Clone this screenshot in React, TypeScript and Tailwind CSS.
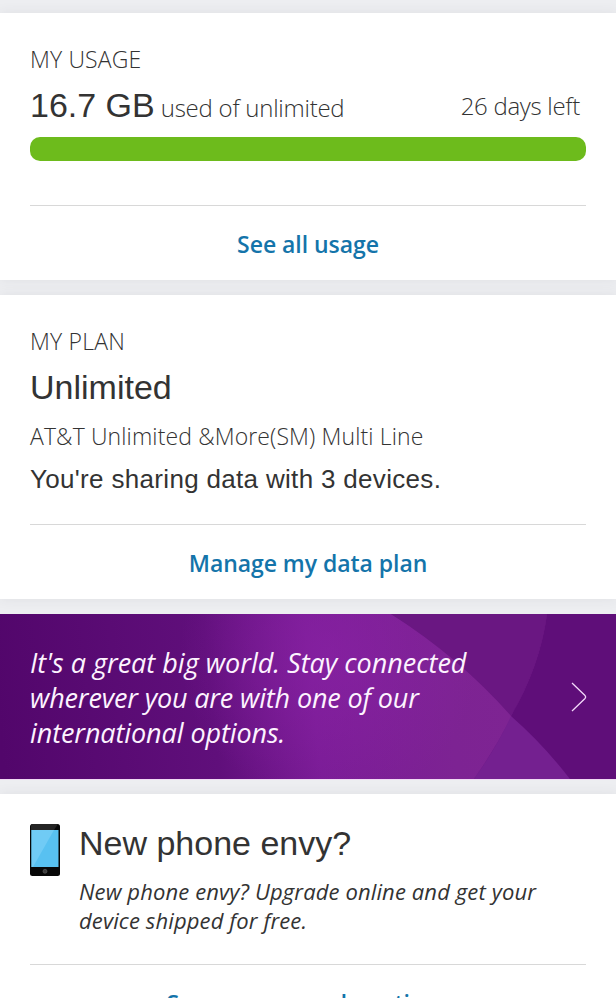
import React from 'react';

interface CardProps {
  className?: string;
  children: React.ReactNode;
}

const Card: React.FC<CardProps> = ({ className = '', children }) => (
  <section className={`bg-white px-[30px] shadow-[0_0_12px_rgba(60,60,80,0.08)] ${className}`}>{children}</section>
);

interface CardLinkProps {
  label: string;
  className?: string;
}

const CardLink: React.FC<CardLinkProps> = ({ label, className = '' }) => (
  <a
    href="#"
    className={`flex h-[75px] items-center justify-center whitespace-nowrap border-t border-[#d8d8d8] pt-0.5 text-[23px] font-semibold tracking-[-0.05px] text-[#1474aa] ${className}`}
  >
    {label}
  </a>
);

const PhoneIcon = () => (
  <svg width="30" height="52" viewBox="0 0 30 52" className="shrink-0">
    <rect width="30" height="52" rx="2.5" fill="#070707" />
    <path d="M2 0H28L24 6H1V2Q1 0 2 0Z" fill="#242424" />
    <rect x="1.5" y="6" width="27" height="37" fill="#58c1f1" />
    <path d="M1.5 6H24L3 43H1.5Z" fill="#70cbf5" />
    <circle cx="15" cy="47.3" r="2" fill="#3b3b3b" stroke="#626262" strokeWidth="0.6" />
  </svg>
);

const BannerArt = () => (
  <svg width="616" height="165" viewBox="0 0 616 165" className="absolute inset-0">
    <defs>
      <linearGradient id="base" gradientUnits="userSpaceOnUse" x1="0" y1="120" x2="560" y2="60">
        <stop offset="0" stopColor="#52066b" />
        <stop offset="0.38" stopColor="#600f7b" />
        <stop offset="0.56" stopColor="#7a1c96" />
        <stop offset="0.8" stopColor="#7d2393" />
        <stop offset="1" stopColor="#7f2592" />
      </linearGradient>
      <radialGradient id="glow" gradientUnits="userSpaceOnUse" cx="330" cy="40" r="150">
        <stop offset="0" stopColor="#8b22a6" stopOpacity="0.6" />
        <stop offset="1" stopColor="#8b22a6" stopOpacity="0" />
      </radialGradient>
    </defs>
    <rect width="616" height="165" fill="url(#base)" />
    <rect width="616" height="165" fill="url(#glow)" />
    <path d="M391 0Q495 63 570 165H474Q532 82 547 0Z" fill="#701b89" />
    <path d="M391 0H547Q540 52 511 102Q460 44 391 0Z" fill="#6a1782" />
    <path d="M511 102Q497 133 474 165H570Q544 130 511 102Z" fill="#742090" />
    <path d="M547 0H616V165H570Q543 130 511 102Q540 52 547 0Z" fill="#5f0e79" />
  </svg>
);

export default function App() {
  return (
    <main className="flex h-[998px] w-[616px] flex-col gap-[15px] overflow-hidden bg-[#edeef1] pt-[13px] font-['Open_Sans',sans-serif] text-[#333]">
      <Card className="h-[267px] shrink-0 pt-[30px]">
        <h2 className="whitespace-nowrap text-[23px] font-light leading-8 tracking-[0.15px]">MY USAGE</h2>
        <div className="mt-[11px] flex h-[39px] items-baseline justify-between whitespace-nowrap pr-[6px]">
          <p className="flex items-baseline gap-1.5">
            <span className="font-['Liberation_Sans',sans-serif] text-[34px] leading-[38px]">16.7 GB</span>
            <span className="text-2xl font-light leading-8 tracking-[-0.25px]">used of unlimited</span>
          </p>
          <p className="relative -top-0.5 text-2xl font-light leading-8 tracking-[-0.3px]">26 days left</p>
        </div>
        <div className="mt-3 h-6 rounded-[10px] bg-[#6dbb1c]" />
        <CardLink label="See all usage" className="mt-11" />
      </Card>

      <Card className="h-[304px] shrink-0 pt-[30px]">
        <h2 className="whitespace-nowrap text-[23px] font-light leading-8 tracking-[0.2px]">MY PLAN</h2>
        <p className="mt-[10px] whitespace-nowrap font-['Liberation_Sans',sans-serif] text-[34px] leading-10">Unlimited</p>
        <p className="mt-[13px] whitespace-nowrap text-[23px] font-light leading-8 tracking-[0.12px]">
          AT&amp;T Unlimited &amp;More(SM) Multi Line
        </p>
        <p className="mt-[11px] whitespace-nowrap font-['Liberation_Sans',sans-serif] text-[26px] leading-8 tracking-[0.32px]">
          You're sharing data with 3 devices.
        </p>
        <CardLink label="Manage my data plan" className="mt-[29px]" />
      </Card>

      <a
        href="#"
        className="relative flex h-[165px] shrink-0 items-center justify-between pl-[30px] pr-7 text-[#fdf3ff] shadow-[0_1px_0_#f0daf4]"
      >
        <BannerArt />
        <p className="relative whitespace-nowrap pt-0.5 text-[27px] italic leading-[35px]">
          It's a great big world. Stay connected
          <br />
          <span className="tracking-[-0.15px]">wherever you are with one of our</span>
          <br />
          <span className="tracking-[-0.1px]">international options.</span>
        </p>
        <svg width="18" height="32" viewBox="0 0 18 32" fill="none" stroke="#f3d9fa" strokeWidth="1.3" className="relative">
          <path d="M2 2L15 14.5Q16.4 16 15 17.5L2 30" />
        </svg>
      </a>

      <Card className="h-[246px] shrink-0 pt-[29px]">
        <div className="flex h-[141px] items-start gap-[19px]">
          <div className="shrink-0 pt-px">
            <PhoneIcon />
          </div>
          <div className="whitespace-nowrap">
            <h2 className="font-['Liberation_Sans',sans-serif] text-[34px] leading-10">New phone envy?</h2>
            <p className="mt-[14px] text-[22px] italic leading-[29px] tracking-[0.12px]">
              New phone envy? Upgrade online and get your
              <br />
              device shipped for free.
            </p>
          </div>
        </div>
        <CardLink label="See your upgrade options" />
      </Card>
    </main>
  );
}
